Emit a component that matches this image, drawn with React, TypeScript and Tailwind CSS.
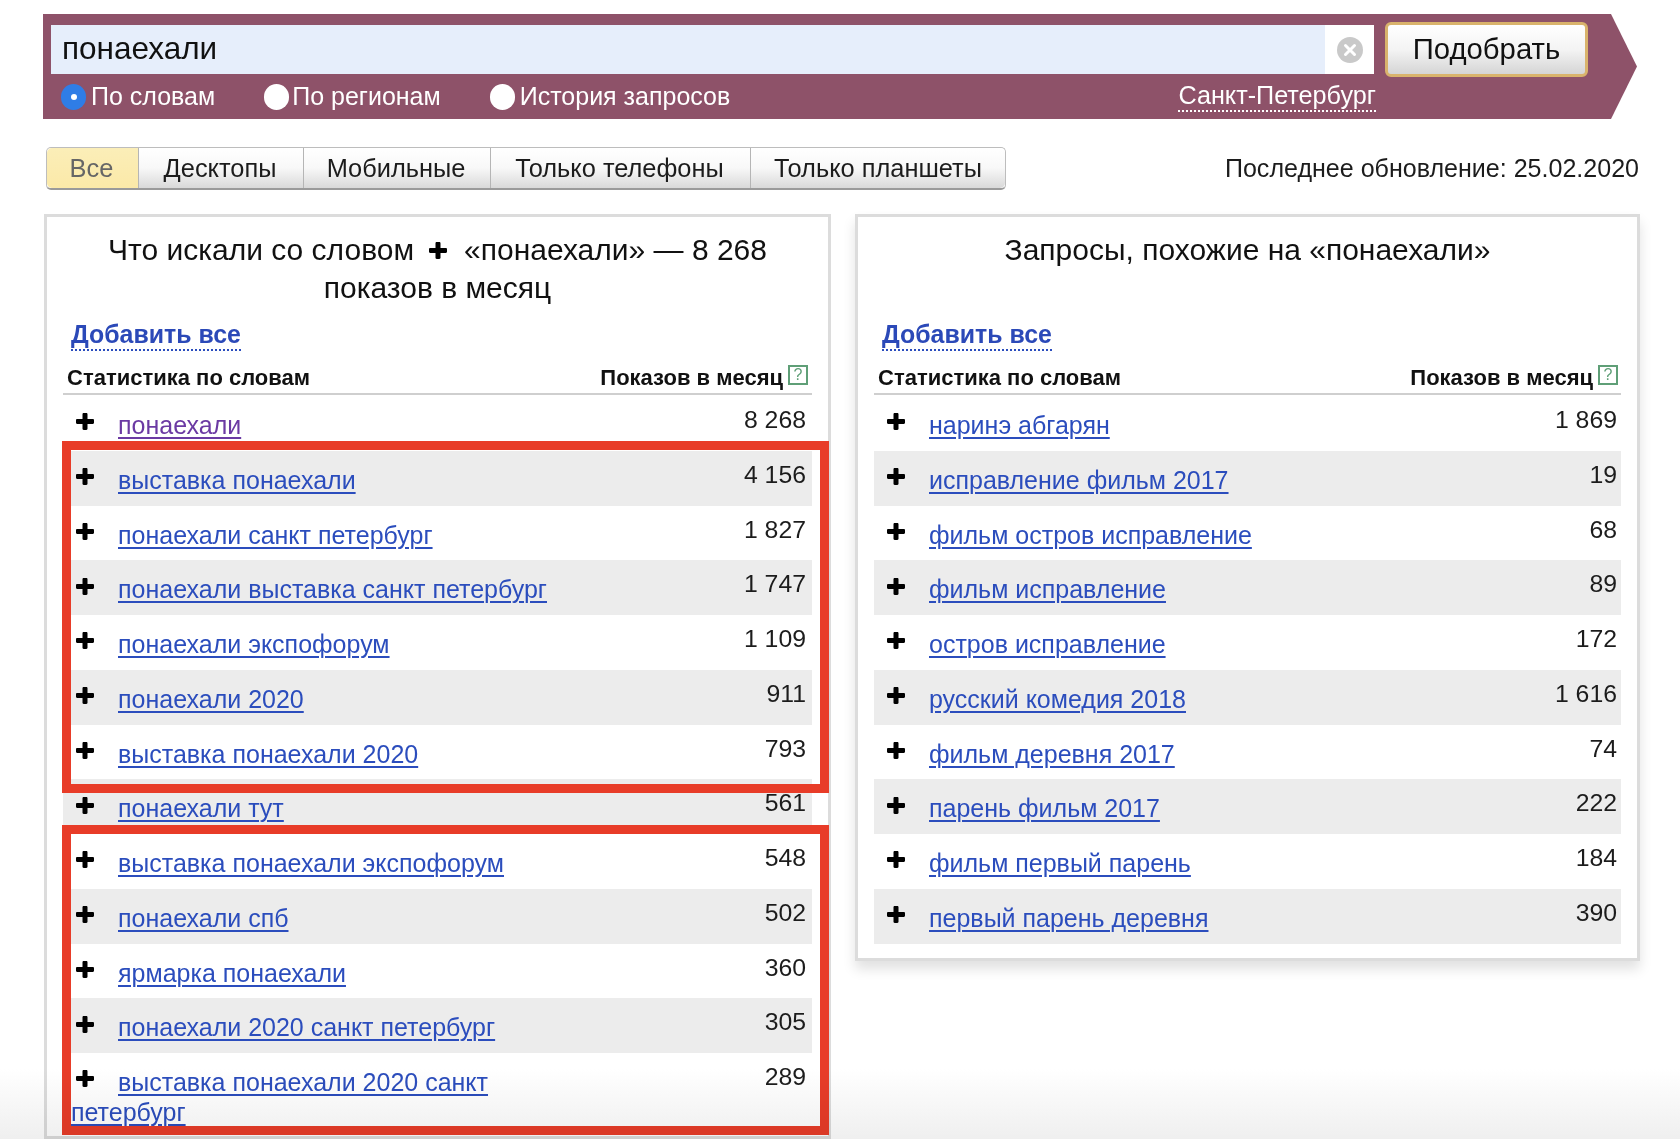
const leftRows: [string, string][] = [
  ["понаехали", "8 268"],
  ["выставка понаехали", "4 156"],
  ["понаехали санкт петербург", "1 827"],
  ["понаехали выставка санкт петербург", "1 747"],
  ["понаехали экспофорум", "1 109"],
  ["понаехали 2020", "911"],
  ["выставка понаехали 2020", "793"],
  ["понаехали тут", "561"],
  ["выставка понаехали экспофорум", "548"],
  ["понаехали спб", "502"],
  ["ярмарка понаехали", "360"],
  ["понаехали 2020 санкт петербург", "305"],
  ["выставка понаехали 2020 санкт петербург", "289"],
];

const rightRows: [string, string][] = [
  ["наринэ абгарян", "1 869"],
  ["исправление фильм 2017", "19"],
  ["фильм остров исправление", "68"],
  ["фильм исправление", "89"],
  ["остров исправление", "172"],
  ["русский комедия 2018", "1 616"],
  ["фильм деревня 2017", "74"],
  ["парень фильм 2017", "222"],
  ["фильм первый парень", "184"],
  ["первый парень деревня", "390"],
];

function Plus({ className }: { className?: string }) {
  return (
    <svg viewBox="0 0 18 17" className={className} fill="#000">
      <path d="M6.500 1.200C6.500.5 7 0 7.700 0h2.600c.7 0 1.200.5 1.200 1.200V6h5.300c.7 0 1.200.5 1.200 1.200v2.600c0 .7-.5 1.200-1.200 1.200h-5.300v4.800c0 .7-.5 1.200-1.200 1.200H7.700c-.7 0-1.200-.5-1.200-1.200V11H1.200C.5 11 0 10.500 0 9.800V7.200C0 6.500.5 6 1.200 6h5.300z" />
    </svg>
  );
}

function Radio({ checked }: { checked?: boolean }) {
  if (checked) {
    return (
      <span className="flex h-[26px] w-[25px] shrink-0 items-center justify-center rounded-full bg-[#2f7de6]">
        <span className="h-[6px] w-[6px] rounded-full bg-white" />
      </span>
    );
  }
  return <span className="block h-[26px] w-[25px] shrink-0 rounded-full bg-white" />;
}

function Tab({ label, width, active }: { label: string; width: string; active?: boolean }) {
  return (
    <div
      className={`flex h-full items-center justify-center border-r border-[#b5b5b5] pr-[2px] text-[25.400px] first:rounded-l-[5px] last:rounded-r-[5px] last:border-r-0 last:pr-0 ${width} ${
        active
          ? "bg-gradient-to-b from-[#fbeeb8] to-[#fbe9a8] text-[#666]"
          : "bg-gradient-to-b from-white via-[#f8f8f8] to-[#d9d9d9] text-[#1c1c1c]"
      }`}
    >
      {label}
    </div>
  );
}

function Row({
  text,
  count,
  index,
  visited,
  wide,
}: {
  text: string;
  count: string;
  index: number;
  visited?: boolean;
  wide?: boolean;
}) {
  return (
    <div
      className={`flex min-h-[54.75px] items-start justify-between pb-[9px] pl-[8px] ${wide ? "pr-[4px]" : "pr-[6px]"} ${
        index % 2 ? "bg-[#ececec]" : ""
      }`}
    >
      <div className="w-[505px] pt-[14px] text-[25px] leading-[30px]">
        <Plus className="mb-[3px] ml-[5px] mr-[24px] inline-block h-[17px] w-[18px] -translate-y-[4px] align-middle" />
        <a
          href="#"
          className={`underline decoration-2 underline-offset-[3px] ${visited ? "text-[#6b3aa3]" : "text-[#2b4dbd]"}`}
        >
          {text}
        </a>
      </div>
      <div className="pt-[9px] text-[24.800px] leading-[30px] text-[#1c1c1c]">{count}</div>
    </div>
  );
}

function Panel({
  title,
  rows,
  className,
  visitedFirst,
  wide,
}: {
  title: React.ReactNode;
  rows: [string, string][];
  className: string;
  visitedFirst?: boolean;
  wide?: boolean;
}) {
  return (
    <div className={`shrink-0 border-[3px] border-[#dcdcdc] bg-white ${className}`}>
      <h2 className="min-h-[102px] px-[40px] pt-[14px] text-center text-[30px] leading-[38px] font-normal text-[#111]">
        {title}
      </h2>
      <div className="px-[16px]">
        <a
          href="#"
          className="ml-[8px] inline-block border-b-2 border-dotted border-[#2b4dbd] text-[24.900px] leading-[30px] font-bold text-[#2b49b8]"
        >
          Добавить все
        </a>
        <div
          className={`mt-[13px] flex h-[31px] items-start justify-between border-b-2 border-[#cfcfcf] pl-[4px] ${
            wide ? "pr-[3px]" : "pr-[4px]"
          }`}
        >
          <span className="text-[22px] leading-[28px] font-bold text-[#111]">Статистика по словам</span>
          <span className="flex items-start text-[22px] leading-[28px] font-bold text-[#111]">
            Показов в месяц
            <span className="ml-[5px] mt-[1px] flex h-[20px] w-[20px] items-center justify-center border-2 border-[#5f9f77] text-[16px] leading-none font-normal text-[#5f9f77]">
              ?
            </span>
          </span>
        </div>
        <div className="mt-[1px]">
          {rows.map(([text, count], i) => (
            <Row key={text} text={text} count={count} index={i} visited={visitedFirst && i === 0} wide={wide} />
          ))}
        </div>
      </div>
    </div>
  );
}

export default function App() {
  return (
    <div className="relative h-[1139px] w-[1680px] overflow-hidden bg-white blur-[0.5px] [font-family:'Liberation_Sans',Arial,sans-serif]">
      {/* search bar */}
      <div className="ml-[43px] h-[105px] w-[1594px] translate-y-[14px] bg-[#8e5269] [clip-path:polygon(0_0,1568px_0,100%_50%,1568px_100%,0_100%)]">
        <div className="flex items-center pl-[8px] pt-[8px]">
          <div className="flex h-[49px] w-[1323px] bg-white">
            <div className="flex h-full w-[1274px] items-center bg-[#e6eefb] pb-[2px] pl-[11px] text-[31.500px] text-[#111]">
              понаехали
            </div>
            <div className="flex flex-1 items-center justify-center">
              <svg viewBox="0 0 26 26" className="h-[26px] w-[26px]">
                <circle cx="13" cy="13" r="13" fill="#c9c9c9" />
                <path d="M8.500 8.500l9 9M17.500 8.500l-9 9" stroke="#fff" strokeWidth="3" strokeLinecap="round" />
              </svg>
            </div>
          </div>
          <button className="ml-[11px] h-[55px] w-[203px] rounded-[6px] border-[3px] border-[#d9b36c] bg-gradient-to-b from-white via-[#f4f4f4] to-[#d5d5d5] pb-[2px] text-[29.300px] text-[#111]">
            Подобрать
          </button>
        </div>
        <div className="flex h-[42px] items-center pb-[3px] pl-[18px] pr-[261px] text-[25px] text-white">
          <Radio checked />
          <span className="ml-[5px]">По словам</span>
          <span className="ml-[49px]"><Radio /></span>
          <span className="ml-[3px]">По регионам</span>
          <span className="ml-[49px]"><Radio /></span>
          <span className="ml-[5px]">История запросов</span>
          <a href="#" className="ml-auto -translate-y-[1px] border-b-2 border-dotted border-white text-[25.200px] leading-[30px]">
            Санкт-Петербург
          </a>
        </div>
      </div>

      {/* device tabs */}
      <div className="mt-[42px] flex h-[43px] items-center justify-between pl-[46px] pr-[41px]">
        <div className="flex h-full rounded-[5px] border border-[#bdbdbd] border-b-2 border-b-[#9a9a9a]">
          <Tab label="Все" width="w-[92px]" active />
          <Tab label="Десктопы" width="w-[165px]" />
          <Tab label="Мобильные" width="w-[187px]" />
          <Tab label="Только телефоны" width="w-[260px]" />
          <Tab label="Только планшеты" width="w-[254px]" />
        </div>
        <span className="text-[25.050px] text-[#1c1c1c]">Последнее обновление: 25.02.2020</span>
      </div>

      {/* result panels */}
      <div className="ml-[44px] mt-[24px] flex items-start gap-[24px]">
        <Panel
          className="w-[787px]"
          rows={leftRows}
          visitedFirst
          title={
            <>
              <span className="block">
                Что искали со словом
                <Plus className="mb-[3px] ml-[15px] mr-[17px] inline-block h-[17px] w-[18px] align-middle" />
                «понаехали» — 8 268
              </span>
              <span className="block">показов в месяц</span>
            </>
          }
        />
        <Panel
          className="h-[747px] w-[785px] shadow-[0_8px_12px_rgba(0,0,0,0.12)]"
          rows={rightRows}
          wide
          title="Запросы, похожие на «понаехали»"
        />
      </div>

      {/* annotation frames drawn over the table */}
      <div className="absolute left-[62px] top-[441px] h-[352px] w-[767px] border-[9px] border-[#e83c28]" />
      <div className="absolute left-[62px] top-[825px] h-[310px] w-[767px] border-[9px] border-[#e83c28]" />
      <div className="pointer-events-none absolute bottom-0 left-0 h-[70px] w-full bg-gradient-to-b from-white to-[#efefef] mix-blend-multiply" />
    </div>
  );
}
